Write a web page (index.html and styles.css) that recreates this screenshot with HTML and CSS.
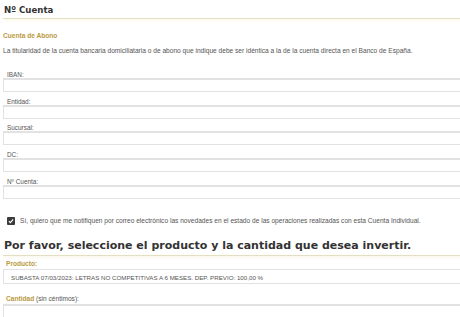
FILE: index.html
```html
<!DOCTYPE html>
<html lang="es">
<head>
    <meta charset="UTF-8">
    <meta name="viewport" content="width=device-width, initial-scale=1.0">
    <title>Nº Cuenta</title>
    <link rel="stylesheet" href="styles.css">
</head>
<body>
    <!-- Datos de la cuenta -->
    <section class="block">
        <h2 class="block-title">Nº Cuenta</h2>
        <h3 class="subtitle">Cuenta de Abono</h3>
        <p class="note">La titularidad de la cuenta bancaria domiciliataria o de abono que indique debe ser idéntica a la de la cuenta directa en el Banco de España.</p>

        <div class="fields">
            <label class="field-label" for="iban">IBAN:</label>
            <input class="field" type="text" id="iban">

            <label class="field-label" for="entidad">Entidad:</label>
            <input class="field" type="text" id="entidad">

            <label class="field-label" for="sucursal">Sucursal:</label>
            <input class="field" type="text" id="sucursal">

            <label class="field-label" for="dc">DC:</label>
            <input class="field" type="text" id="dc">

            <label class="field-label" for="cuenta">Nº Cuenta:</label>
            <input class="field" type="text" id="cuenta">
        </div>

        <label class="notify">
            <span class="check">
                <svg width="6" height="6" viewBox="0 0 10 10"><path d="M1.5 5.2 L4 7.6 L8.6 2.4" fill="none" stroke="#fff" stroke-width="2"/></svg>
            </span>
            Sí, quiero que me notifiquen por correo electrónico las novedades en el estado de las operaciones realizadas con esta Cuenta Individual.
        </label>
    </section>

    <!-- Producto -->
    <section class="block product">
        <h2 class="block-title">Por favor, seleccione el producto y la cantidad que desea invertir.</h2>

        <div class="gold-label">Producto:</div>
        <div class="select">SUBASTA 07/03/2023: LETRAS NO COMPETITIVAS A 6 MESES. DEP. PREVIO: 100,00 %</div>

        <div class="gold-label"><b>Cantidad</b> <span>(sin céntimos):</span></div>
        <input class="field" type="text" id="cantidad">
    </section>
</body>
</html>
```

FILE: styles.css
```css
/* Global */
body {
    margin: 0;
    padding: 0 0 0 3px;
    font-family: "Liberation Sans", Arial, sans-serif;
    color: #555;
    background-color: #fff;
    overflow: hidden;
}

.block {
    margin-right: -8px;
}

/* Titles */
.block-title {
    margin: 0;
    padding: 5px 0 3px 1px;
    font-family: "DejaVu Sans", sans-serif;
    font-size: 8.6px;
    font-weight: bold;
    color: #333;
    border-bottom: 1px solid #e5dfc2;
    box-shadow: 0 3px 3px -1px #fbf9ee;
}

.subtitle {
    margin: 13px 0 0;
    font-size: 6.6px;
    font-weight: bold;
    color: #b99a3f;
}

.note {
    margin: 8px 0 0;
    font-size: 6.6px;
}

/* Account fields */
.fields {
    margin-top: 17px;
}

.field-label {
    display: block;
    padding-left: 4px;
    font-size: 6.4px;
    line-height: 7px;
}

.field {
    display: block;
    box-sizing: border-box;
    width: 100%;
    height: 14px;
    margin: 0 0 5.7px;
    padding: 0;
    border: 1px solid #e2e2e2;
    border-top-width: 2px;
    border-right: none;
    background: #fff;
}

/* Notification checkbox */
.notify {
    display: flex;
    align-items: center;
    gap: 5px;
    margin: 18px 0 0 4px;
    font-size: 6.6px;
}

.check {
    display: flex;
    align-items: center;
    justify-content: center;
    flex-shrink: 0;
    width: 8px;
    height: 8px;
    border-radius: 1px;
    background-color: #3c3c3c;
}

/* Product */
.product {
    margin-top: 14px;
}

.product .block-title {
    padding-top: 0;
    font-size: 11px;
}

.gold-label {
    margin: 4px 0 2px 3px;
    font-size: 6.6px;
    font-weight: bold;
    color: #b99a3f;
}

.gold-label span {
    font-weight: normal;
    color: #555;
}

.select {
    box-sizing: border-box;
    height: 15px;
    margin-bottom: 11px;
    padding: 4px 0 0 7px;
    font-size: 6.2px;
    border: 1px solid #e2e2e2;
    border-right: none;
}
```
